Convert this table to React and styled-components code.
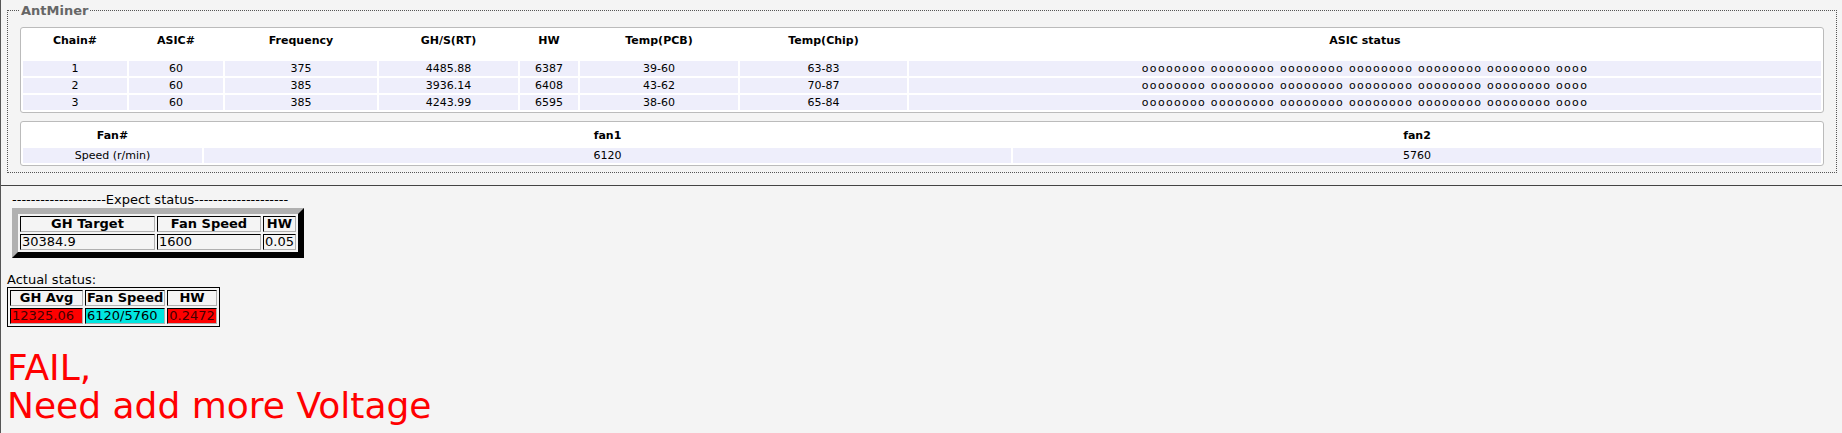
import React from 'react';
import styled, { createGlobalStyle } from 'styled-components';

const GlobalStyle = createGlobalStyle`
  html, body {
    margin: 0;
    padding: 0;
    background: #f4f4f4;
  }
  body {
    font-family: "DejaVu Sans", Verdana, sans-serif;
    color: #000;
  }
`;

const Page = styled.div`
  border-left: 1px solid #555;
  min-height: 433px;
  box-sizing: border-box;
`;

const TopSection = styled.div`
  padding: 3px 5px 12px 6px;
  border-bottom: 1px solid #444;
`;

const FieldSet = styled.fieldset`
  margin: 0;
  padding: 9px 12px 6px 12px;
  border: 1px dotted #555;
  min-width: 0;
`;

const Legend = styled.legend`
  margin: 0 0 0 -1px;
  padding: 0 2px;
  font-size: 13px;
  line-height: 15px;
  font-weight: bold;
  color: #666;
`;

const Panel = styled.div`
  background: #fff;
  border: 1px solid #bbb;
  border-radius: 3px;
  & + & {
    margin-top: 8px;
  }
`;

const Grid = styled.table`
  width: 100%;
  border-spacing: 2px;
  table-layout: fixed;
  font-size: 11px;
`;

const Head = styled.th`
  height: ${(p) => p.$h || 29}px;
  box-sizing: border-box;
  padding: ${(p) => (p.$top ? '4px 0 0' : '0')};
  vertical-align: ${(p) => (p.$top ? 'top' : 'middle')};
  font-weight: bold;
  text-align: center;
`;

const Cell = styled.td`
  height: 15px;
  padding: 0;
  background: #eeeefb;
  text-align: center;
  white-space: nowrap;
  letter-spacing: ${(p) => (p.$spread ? '1.3px' : 'normal')};
`;

const BottomSection = styled.div`
  padding: 3px 6px 0 6px;
`;

const ExpectBlock = styled.div`
  margin-left: 5px;
  display: inline-block;
`;

const Caption = styled.div`
  font-size: 13px;
  line-height: 16px;
`;

const ExpectTable = styled.table`
  border-spacing: 2px;
  border-style: solid;
  border-width: 6px;
  border-color: #b0b0b0 #000 #000 #b0b0b0;
  font-size: 13px;
  line-height: 14px;
`;

const BoxHead = styled.th`
  padding: 0 1px;
  border: 1px solid;
  border-color: #000 #b0b0b0 #b0b0b0 #000;
  font-weight: bold;
  text-align: center;
  white-space: nowrap;
  width: ${(p) => (p.$w ? `${p.$w}px` : 'auto')};
`;

const BoxCell = styled.td`
  padding: 0 1px;
  border: 1px solid;
  border-color: #000 #b0b0b0 #b0b0b0 #000;
  background: ${(p) => p.$bg || 'transparent'};
  text-align: left;
  white-space: nowrap;
  color: ${(p) => (p.$bg === '#ff0000' ? '#400' : '#000')};
`;

const ActualCaption = styled(Caption)`
  margin-top: 14px;
  line-height: 15px;
`;

const ActualTable = styled.table`
  border-spacing: 2px;
  border: 1px solid #000;
  font-size: 13px;
  line-height: 14px;
`;

const Verdict = styled.div`
  margin-top: 22px;
  color: #ff0000;
  font-size: 36px;
  line-height: 38px;
`;

const chains = [
  { id: 1, asic: 60, freq: 375, rate: '4485.88', hw: 6387, pcb: '39-60', chip: '63-83' },
  { id: 2, asic: 60, freq: 385, rate: '3936.14', hw: 6408, pcb: '43-62', chip: '70-87' },
  { id: 3, asic: 60, freq: 385, rate: '4243.99', hw: 6595, pcb: '38-60', chip: '65-84' },
];

const group = 'oooooooo';
const asicStatus = [group, group, group, group, group, group, 'oooo'].join(' ');

const chainCols = [104, 94, 152, 139, 58, 158, 167, null];

export default function App() {
  return (
    <Page>
      <GlobalStyle />
      <TopSection>
        <FieldSet>
          <Legend>AntMiner</Legend>
          <Panel>
            <Grid>
              <colgroup>
                {chainCols.map((w, i) => (
                  <col key={i} style={w ? { width: w } : undefined} />
                ))}
              </colgroup>
              <thead>
                <tr>
                  <Head $top>Chain#</Head>
                  <Head $top>ASIC#</Head>
                  <Head $top>Frequency</Head>
                  <Head $top>GH/S(RT)</Head>
                  <Head $top>HW</Head>
                  <Head $top>Temp(PCB)</Head>
                  <Head $top>Temp(Chip)</Head>
                  <Head $top>ASIC status</Head>
                </tr>
              </thead>
              <tbody>
                {chains.map((c) => (
                  <tr key={c.id}>
                    <Cell>{c.id}</Cell>
                    <Cell>{c.asic}</Cell>
                    <Cell>{c.freq}</Cell>
                    <Cell>{c.rate}</Cell>
                    <Cell>{c.hw}</Cell>
                    <Cell>{c.pcb}</Cell>
                    <Cell>{c.chip}</Cell>
                    <Cell $spread>{asicStatus}</Cell>
                  </tr>
                ))}
              </tbody>
            </Grid>
          </Panel>
          <Panel>
            <Grid>
              <colgroup>
                <col style={{ width: 179 }} />
                <col style={{ width: 807 }} />
                <col />
              </colgroup>
              <thead>
                <tr>
                  <Head $h={22}>Fan#</Head>
                  <Head $h={22}>fan1</Head>
                  <Head $h={22}>fan2</Head>
                </tr>
              </thead>
              <tbody>
                <tr>
                  <Cell>Speed (r/min)</Cell>
                  <Cell>6120</Cell>
                  <Cell>5760</Cell>
                </tr>
              </tbody>
            </Grid>
          </Panel>
        </FieldSet>
      </TopSection>
      <BottomSection>
        <ExpectBlock>
          <Caption>--------------------Expect status--------------------</Caption>
          <ExpectTable>
            <thead>
              <tr>
                <BoxHead $w={131}>GH Target</BoxHead>
                <BoxHead $w={100}>Fan Speed</BoxHead>
                <BoxHead>HW</BoxHead>
              </tr>
            </thead>
            <tbody>
              <tr>
                <BoxCell>30384.9</BoxCell>
                <BoxCell>1600</BoxCell>
                <BoxCell>0.05</BoxCell>
              </tr>
            </tbody>
          </ExpectTable>
        </ExpectBlock>
        <ActualCaption>Actual status:</ActualCaption>
        <ActualTable>
          <thead>
            <tr>
              <BoxHead $w={69}>GH Avg</BoxHead>
              <BoxHead $w={73}>Fan Speed</BoxHead>
              <BoxHead $w={38}>HW</BoxHead>
            </tr>
          </thead>
          <tbody>
            <tr>
              <BoxCell $bg="#ff0000">12325.06</BoxCell>
              <BoxCell $bg="#00e6e0">6120/5760</BoxCell>
              <BoxCell $bg="#ff0000">0.2472</BoxCell>
            </tr>
          </tbody>
        </ActualTable>
        <Verdict>
          FAIL,
          <br />
          Need add more Voltage
        </Verdict>
      </BottomSection>
    </Page>
  );
}
